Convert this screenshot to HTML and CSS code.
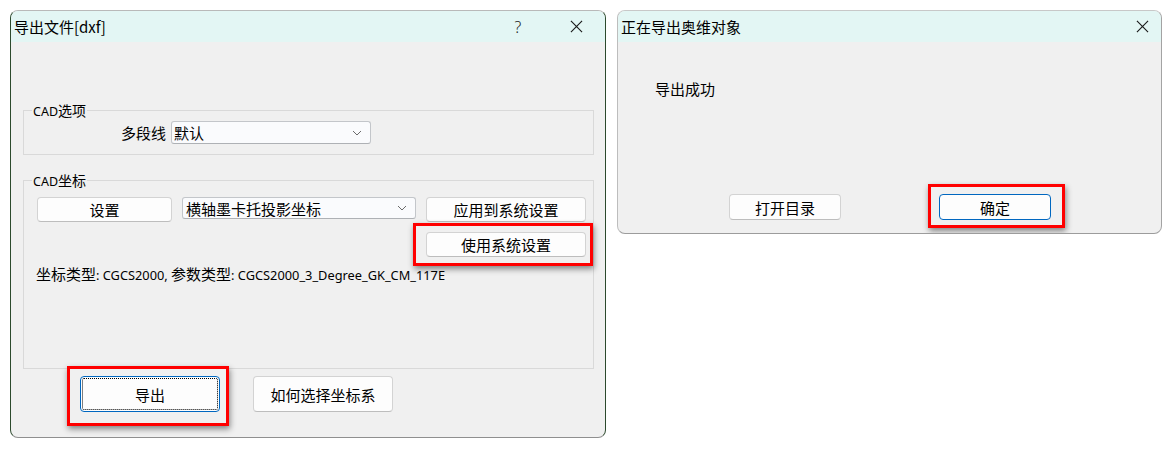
FILE: index.html
```html
<!DOCTYPE html>
<html>
<head>
<meta charset="utf-8">
<link rel="stylesheet" href="styles.css">
</head>
<body>
<div class="desk">

  <div class="dlg dlg-export">
    <div class="cap">
      <span class="cap-title">导出文件[dxf]</span>
      <span class="cap-btn cap-help">?</span>
      <span class="cap-btn cap-close">
        <svg width="14" height="14" viewBox="0 0 14 14"><path d="M1 1L13 13M13 1L1 13" stroke="#1a1a1a" stroke-width="1.2" fill="none"/></svg>
      </span>
    </div>
    <div class="dlg-body">
      <fieldset class="grp grp-opt">
        <legend><span class="lat">CAD</span>选项</legend>
        <div class="grp-inner opt-row">
          <label class="opt-label">多段线</label>
          <div class="combo combo-line">
            <span>默认</span>
            <svg class="chev" width="10" height="6" viewBox="0 0 10 6"><path d="M1 1L5 5L9 1" stroke="#6b6b6b" stroke-width="1" fill="none"/></svg>
          </div>
        </div>
      </fieldset>

      <fieldset class="grp grp-coord">
        <legend><span class="lat">CAD</span>坐标</legend>
        <div class="grp-inner coord-inner">
          <div class="coord-row">
            <button class="btn btn-set">设置</button>
            <div class="combo combo-proj">
              <span>横轴墨卡托投影坐标</span>
              <svg class="chev" width="10" height="6" viewBox="0 0 10 6"><path d="M1 1L5 5L9 1" stroke="#6b6b6b" stroke-width="1" fill="none"/></svg>
            </div>
            <button class="btn btn-wide">应用到系统设置</button>
          </div>
          <div class="coord-row2">
            <span class="mark mark-use"><button class="btn btn-wide">使用系统设置</button></span>
          </div>
          <p class="coord-info">坐标类型<span class="lat">: CGCS2000, </span>参数类型<span class="lat">: CGCS2000_3_Degree_GK_CM_117E</span></p>
        </div>
      </fieldset>

      <div class="foot">
        <span class="mark mark-export"><button class="btn btn-big btn-default btn-focus">导出</button></span>
        <button class="btn btn-big">如何选择坐标系</button>
      </div>
    </div>
  </div>

  <div class="dlg dlg-done">
    <div class="cap">
      <span class="cap-title">正在导出奥维对象</span>
      <span class="cap-btn cap-close cap-close-sm">
        <svg width="14" height="14" viewBox="0 0 14 14"><path d="M1 1L13 13M13 1L1 13" stroke="#1a1a1a" stroke-width="1.2" fill="none"/></svg>
      </span>
    </div>
    <div class="dlg-body done-body">
      <p class="done-msg">导出成功</p>
      <div class="done-foot">
        <button class="btn btn-mid">打开目录</button>
        <span class="mark mark-ok"><button class="btn btn-mid btn-default">确定</button></span>
      </div>
    </div>
  </div>

</div>
</body>
</html>
```

FILE: styles.css
```css
* {box-sizing: border-box;}
body {margin: 0; background: #fff; font-family: "Noto Sans CJK SC", "Noto Sans", sans-serif; font-size: 15px; color: #000;}
.lat {font-family: "Noto Sans", "Noto Sans CJK SC", sans-serif; font-size: 12.5px;}

.desk {display: flex; align-items: flex-start; gap: 11px; padding: 10px 0 0 10px;}

/* dialog frame */
.dlg {display: flex; flex-direction: column; background: #f0f0f0; border: 1px solid #b9b9b9; border-radius: 8px; overflow: hidden;}
.dlg-export {width: 596px; height: 428px; border-left-color: #2c4a2d; border-right-color: #2c4a2d; border-bottom-color: #8f8f8f;}
.dlg-done {width: 545px; height: 224px; border-color: #c8c8c8 #a3a3a3 #9c9c9c #bdbdbd;}

.cap {display: flex; align-items: center; height: 31px; background: #e3f6f4; flex-shrink: 0;}
.cap-title {flex: 1; padding-left: 3px; font-size: 15px; line-height: 31px; white-space: nowrap;}
.cap-btn {display: flex; align-items: center; justify-content: center; width: 58px; height: 31px;}
.cap-help {font-family: "Noto Sans", sans-serif; font-size: 16px; font-weight: 300; color: #222;}
.cap-close svg {width: 13px; height: 13px;}
.cap-close-sm {width: 38px;}

.dlg-body {flex: 1; display: flex; flex-direction: column; padding: 0 11px 0 12px;}

/* group boxes */
.grp {margin: 0; padding: 0; border: 1px solid #d9d9d9; border-radius: 0; min-width: 0;}
.grp legend {margin-left: 8px; padding: 0 1px; height: 20px; line-height: 20px; font-size: 14px;}
.grp-opt {margin-top: 58px; height: 55px;}
.grp-opt .grp-inner {padding-top: 1px;}
.grp-coord {margin-top: 15px; height: 199px;}
.coord-inner {padding: 7px 7px 0 13px;}

.opt-row {display: flex; align-items: center;}
.opt-label {width: 147px; padding-right: 5px; text-align: right; font-size: 15px; line-height: 22px;}

.combo {display: flex; align-items: center; justify-content: space-between; height: 23px; background: #fafbfd; border: 1px solid #c3c6ca; border-bottom-color: #aeb1b5; border-radius: 3px; padding: 0 8px 0 2px; font-size: 15px; line-height: 21px;}
.combo-line {width: 200px;}
.combo-proj {width: 234px; height: 22px; padding-left: 3px;}
.chev {flex-shrink: 0;}

.coord-row {display: flex; align-items: flex-start; gap: 10px;}
.coord-row2 {display: flex; justify-content: flex-end; margin-top: 10px;}
.coord-info {margin: 8px 0 0 -1px; font-size: 15px; line-height: 18px; white-space: nowrap;}
.coord-info .lat {font-size: 12.8px;}

/* buttons */
.btn {font-family: inherit; font-size: 15px; color: #000; background: #fdfdfd; border: 1px solid #d3d3d3; border-bottom-color: #bdbdbd; border-radius: 4px; padding: 0; line-height: 1;}
.btn-set {width: 135px; height: 25px;}
.btn-wide {width: 160px; height: 25px;}
.btn-big {width: 140px; height: 36px;}
.btn-mid {width: 112px; height: 26px;}
.btn-default {border: 1px solid #0067c0;}
.btn-focus {outline: 1px dotted #000; outline-offset: -3px;}

.foot {display: flex; gap: 33px; margin-top: 7px; padding-left: 57px;}

/* done dialog */
.done-body {padding: 0 0 13px 0;}
.done-msg {margin: 37px 0 0 37px; font-size: 15px; line-height: 20px;}
.done-foot {display: flex; justify-content: center; gap: 98px; margin-top: auto; padding-left: 1px;}

/* red callout boxes */
.mark {position: relative; display: inline-flex;}
.mark::after {content: ""; position: absolute; border: 3px solid #ff0000; box-shadow: 1px 3px 6px rgba(0, 0, 0, 0.45); pointer-events: none;}
.mark-export::after {top: -10px; left: -13px; right: -9px; bottom: -14px;}
.mark-use::after {top: -9px; left: -13px; right: -7px; bottom: -9px;}
.mark-ok::after {top: -10px; left: -11px; right: -14px; bottom: -8px;}
```
